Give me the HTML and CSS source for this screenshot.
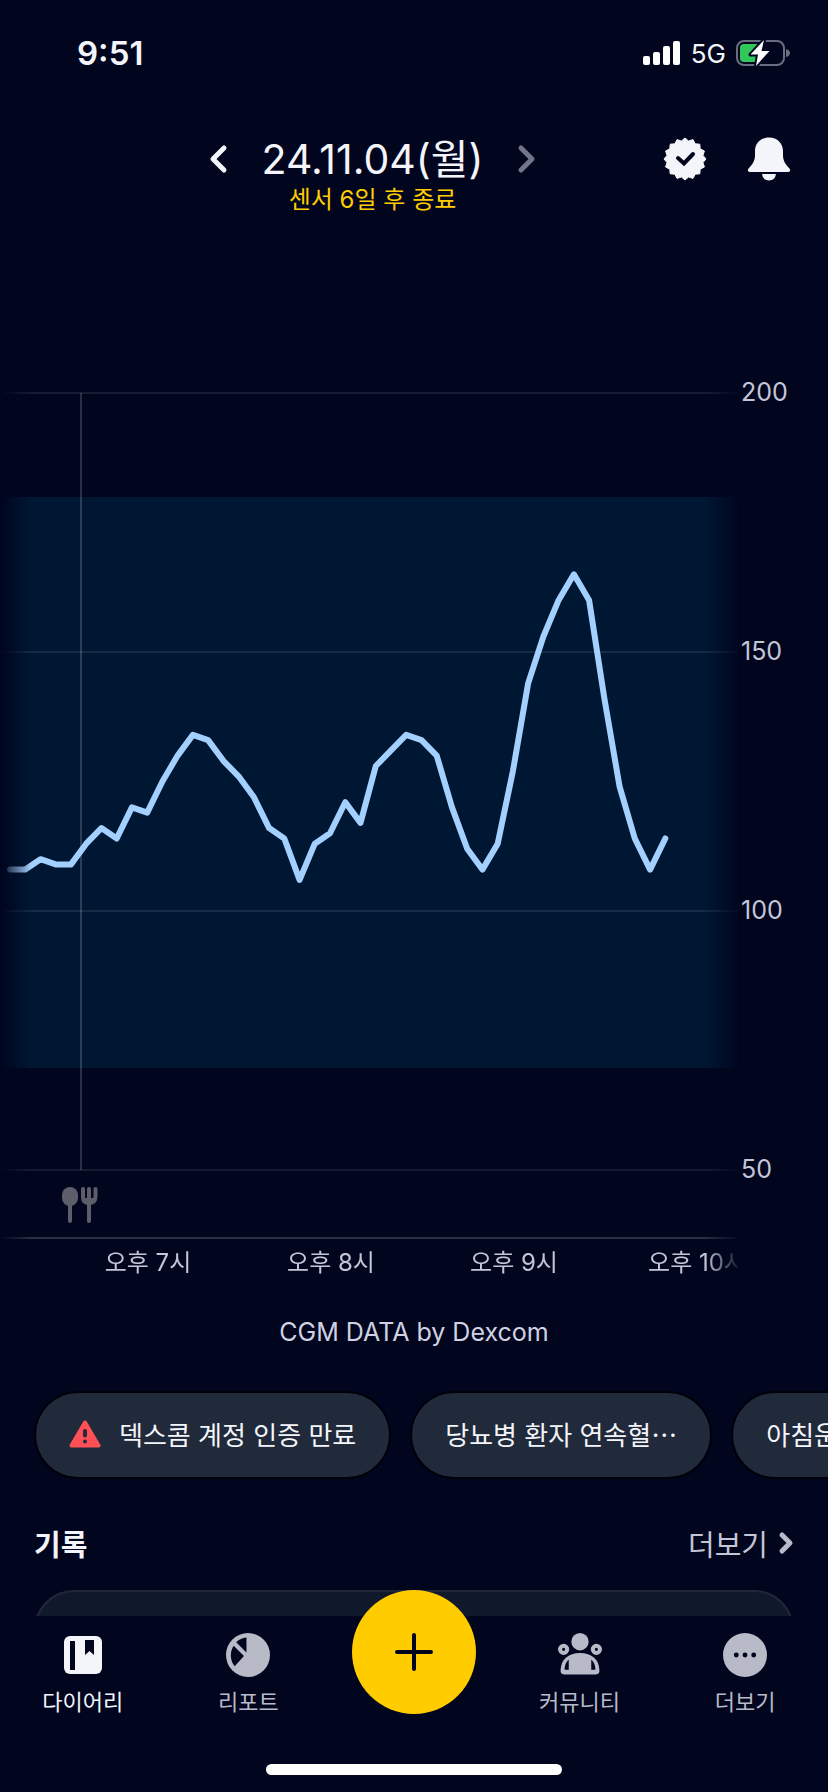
FILE: index.html
```
<!DOCTYPE html>
<html lang="ko">
<head>
  <meta charset="UTF-8">
  <meta name="viewport" content="width=device-width, initial-scale=1">
  <title>다이어리</title>
  <link rel="stylesheet" href="styles.css">
</head>
<body>
  <div class="app">
    <main class="content">
      <div class="status-bar">
        <span class="time">9:51</span>
        <div class="status-icons">
          <svg width="38" height="26" viewBox="0 0 38 26" fill="#fff">
            <rect x="0" y="16" width="7" height="9" rx="2"/>
            <rect x="10" y="12" width="7" height="13" rx="2"/>
            <rect x="20" y="6" width="7" height="19" rx="2"/>
            <rect x="30" y="1" width="7" height="24" rx="2"/>
          </svg>
          <span class="network">5G</span>
          <svg width="54" height="28" viewBox="0 0 54 28">
            <rect x="1" y="2" width="47" height="24" rx="7" fill="none" stroke="#6b6d80" stroke-width="2"/>
            <path d="M50 10q4 1 4 4t-4 4z" fill="#6b6d80"/>
            <path d="M8 5H25V23H8Q4 23 4 19V9Q4 5 8 5z" fill="#30c85a"/>
            <path d="M28 1L14.500 15.500H22L20 27L33.500 12H25.500z" fill="#fff" stroke="#01051e" stroke-width="4" stroke-linejoin="round" paint-order="stroke"/>
          </svg>
        </div>
      </div>

      <header class="header">
        <div class="date-picker">
          <div class="date-row">
            <button type="button" class="icon-button" aria-label="이전 날짜">
              <svg width="24" height="32" viewBox="0 0 24 32" fill="none" stroke="#f4f5fa" stroke-width="5" stroke-linecap="round" stroke-linejoin="round"><path d="M18 5L7 16L18 27"/></svg>
            </button>
            <h1 class="date">24.11.04(월)</h1>
            <button type="button" class="icon-button" aria-label="다음 날짜">
              <svg width="24" height="32" viewBox="0 0 24 32" fill="none" stroke="#72748a" stroke-width="5" stroke-linecap="round" stroke-linejoin="round"><path d="M6 5L17 16L6 27"/></svg>
            </button>
          </div>
          <p class="sensor">센서 6일 후 종료</p>
        </div>
        <div class="header-actions">
          <button type="button" class="icon-button" aria-label="인증">
            <svg width="44" height="44" viewBox="0 0 44 44">
              <polygon fill="#f4f5fa" stroke="#f4f5fa" stroke-linejoin="round" points="22,1 25.600,4 30,2.600 32.200,6.800 36.800,7.200 37.200,11.800 41.400,14 40,18.400 43,22 40,25.600 41.400,30 37.200,32.200 36.800,36.800 32.200,37.200 30,41.400 25.600,40 22,43 18.400,40 14,41.400 11.800,37.200 7.200,36.800 6.800,32.200 2.600,30 4,25.600 1,22 4,18.400 2.600,14 6.800,11.800 7.200,7.200 11.800,6.800 14,2.600 18.400,4"/>
              <path d="M15 21L21 26.500L30 17" fill="none" stroke="#01051e" stroke-width="4" stroke-linecap="round"/>
            </svg>
          </button>
          <button type="button" class="icon-button" aria-label="알림">
            <svg width="44" height="44" viewBox="0 0 44 44" fill="#f4f5fa">
              <path d="M22 0.500C13.500 0.500 8 6.500 8 14V18C8 24 5.500 27.500 1.500 31.500Q-0.500 35 3 35H41Q44.500 35 42.500 31.500C38.500 27.500 36 24 36 18V14C36 6.500 30.500 0.500 22 0.500z"/>
              <path d="M15 37H29Q28 43.500 22 43.500T15 37z"/>
            </svg>
          </button>
        </div>
      </header>

      <svg class="chart" viewBox="0 0 828 930" role="img" aria-label="혈당 그래프">
        <defs>
          <linearGradient id="fade" gradientUnits="userSpaceOnUse" x1="0" y1="0" x2="742" y2="0">
            <stop offset="0" stop-color="#fff" stop-opacity="0"/>
            <stop offset="0.042" stop-color="#fff"/>
            <stop offset="0.95" stop-color="#fff"/>
            <stop offset="1" stop-color="#fff" stop-opacity="0"/>
          </linearGradient>
          <mask id="fadeMask" maskUnits="userSpaceOnUse" x="0" y="0" width="742" height="930">
            <rect width="742" height="930" fill="url(#fade)"/>
          </mask>
        </defs>
        <g mask="url(#fadeMask)">
          <rect class="range" x="0" y="136" width="742" height="571"/>
          <path class="grid" d="M0 32H742M0 291H742M0 550H742M0 809H742"/>
          <path class="marker" d="M81 32V809"/>
          <path class="axis" d="M0 877H742"/>
          <polyline class="glucose" id="glucose"/>
          <g class="hours">
            <text x="148" y="910">오후 7시</text>
            <text x="331" y="910">오후 8시</text>
            <text x="514" y="910">오후 9시</text>
            <text x="697" y="910">오후 10시</text>
          </g>
        </g>
        <!-- meal -->
        <g fill="#5d5e69">
          <rect x="62" y="826" width="16" height="19" rx="8"/>
          <rect x="68" y="842" width="4" height="20" rx="2"/>
          <path d="M83 828V836Q83 842 89 842T95.500 836V828M89 828V860" fill="none" stroke="#5d5e69" stroke-width="4" stroke-linecap="round"/>
          <path d="M83 837H95L92 843H86z"/>
        </g>
        <g class="levels">
          <text x="741" y="40">200</text>
          <text x="741" y="299">150</text>
          <text x="741" y="558">100</text>
          <text x="741" y="817">50</text>
        </g>
      </svg>
      <p class="source">CGM DATA by Dexcom</p>

      <div class="chips">
        <button type="button" class="chip">
          <svg width="32" height="28" viewBox="0 0 32 28">
            <path d="M16 2.500L29.500 25.500H2.500z" fill="#ff5058" stroke="#ff5058" stroke-width="4" stroke-linejoin="round"/>
            <path d="M16 11V15.500M16 21.500V21.600" stroke="#202a3a" stroke-width="4" stroke-linecap="round"/>
          </svg>
          덱스콤 계정 인증 만료
        </button>
        <button type="button" class="chip">당뇨병 환자 연속혈⋯</button>
        <button type="button" class="chip">아침운동 기록</button>
      </div>

      <section class="records">
        <div class="records-head">
          <h2>기록</h2>
          <a href="#" class="more">더보기
            <svg width="16" height="24" viewBox="0 0 16 24" fill="none" stroke="#b8bac8" stroke-width="5" stroke-linecap="round" stroke-linejoin="round"><path d="M4 4L12 12L4 20"/></svg>
          </a>
        </div>
        <div class="record-card"></div>
      </section>
    </main>

    <nav class="tab-bar">
      <div class="tabs">
        <a href="#" class="tab active">
          <svg width="44" height="44" viewBox="0 0 44 44">
            <rect x="3" y="3" width="38" height="38" rx="6" fill="currentColor"/>
            <path d="M9 8h5v29h-5zM24 7h9v15l-4.500-4l-4.500 4z" fill="#01051e"/>
          </svg>
          다이어리
        </a>
        <a href="#" class="tab">
          <svg width="44" height="44" viewBox="0 0 43 43">
            <circle cx="21.500" cy="21.500" r="21.500" fill="currentColor"/>
            <path d="M20 4.500A17 17 0 0 0 10 9L20 19zM7.500 12.500L17.500 22.500L8.500 32.500A17 17 0 0 1 7.500 12.500z" fill="#01051e"/>
          </svg>
          리포트
        </a>
        <button type="button" class="add" aria-label="추가">
          <svg width="40" height="40" viewBox="0 0 40 40" stroke="#01051e" stroke-width="4" stroke-linecap="round"><path d="M3 20H37M20 3V37"/></svg>
        </button>
        <a href="#" class="tab">
          <svg width="44" height="44" viewBox="0 0 43 43">
            <circle cx="21.500" cy="8.500" r="8.500" fill="currentColor"/>
            <circle cx="5.500" cy="16" r="3.500" fill="none" stroke="currentColor" stroke-width="4"/>
            <circle cx="37.500" cy="16" r="3.500" fill="none" stroke="currentColor" stroke-width="4"/>
            <path d="M2.500 37C2.500 26 10 19.500 21.500 19.500S40.500 26 40.500 37Q40.500 40.500 37 40.500H6Q2.500 40.500 2.500 37z" fill="currentColor"/>
            <path d="M10.500 26V36H6.500Q6.500 29.500 10.500 26zM32.500 26V36H36.500Q36.500 29.500 32.500 26z" fill="#01051e"/>
          </svg>
          커뮤니티
        </a>
        <a href="#" class="tab">
          <svg width="44" height="44" viewBox="0 0 43 43">
            <circle cx="21.500" cy="21.500" r="21.500" fill="currentColor"/>
            <g fill="#01051e"><circle cx="13" cy="21.500" r="2.400"/><circle cx="21.500" cy="21.500" r="2.400"/><circle cx="30" cy="21.500" r="2.400"/></g>
          </svg>
          더보기
        </a>
      </div>
      <div class="home-bar"></div>
    </nav>
  </div>

  <script>
    // one reading every 5 minutes, mg/dL
    const readings = [
      108, 108, 110, 109, 109, 113, 116, 114, 120, 119, 125, 130, 134, 133, 129,
      126, 122, 116, 114, 106, 113, 115, 121, 117, 128, 131, 134, 133, 130, 120,
      112, 108, 113, 127, 144, 153, 160, 165, 160, 141, 124, 114, 108, 114
    ];

    const points = readings.map(function(value, i) {
      const x = 10 + i * 15.24;
      const y = 32 + (200 - value) * 5.18;
      return x.toFixed(1) + ',' + y.toFixed(1);
    });

    document.getElementById('glucose').setAttribute('points', points.join(' '));
  </script>
</body>
</html>
```
FILE: styles.css
```
* {
  box-sizing: border-box;
}

body {
  margin: 0;
  background-color: #01051e;
  color: #f4f5fa;
  font-family: Inter, "Noto Sans CJK KR", sans-serif;
}

h1,
h2,
p {
  margin: 0;
}

a {
  color: inherit;
  text-decoration: none;
}

button {
  border: none;
  font: inherit;
  color: inherit;
  cursor: pointer;
}

svg {
  display: block;
  flex-shrink: 0;
}

.app {
  display: flex;
  flex-direction: column;
  height: 100vh;
}

.content {
  flex: 1;
  min-height: 0;
  overflow-x: hidden;
  overflow-y: auto;
  scrollbar-width: none;
}

/* status bar */

.status-bar {
  display: flex;
  align-items: center;
  justify-content: space-between;
  height: 106px;
  padding: 0 38px 0 77px;
}

.time {
  font-size: 33px;
  font-weight: 600;
}

.status-icons {
  display: flex;
  align-items: center;
  gap: 10px;
}

.network {
  font-size: 26px;
  font-weight: 400;
}

/* header */

.header {
  display: flex;
  padding: 29px 37px 0 82px;
}

.date-picker {
  flex: 1;
}

.date-row {
  display: flex;
  align-items: center;
  justify-content: center;
  gap: 32px;
  height: 48px;
}

.date {
  font-size: 41px;
  font-weight: 400;
  line-height: 48px;
}

.sensor {
  margin-top: 3px;
  color: #ffcc00;
  font-size: 24px;
  line-height: 28px;
  text-align: center;
}

.header-actions {
  display: flex;
  align-items: center;
  gap: 40px;
  height: 48px;
}

.icon-button {
  padding: 0;
  background: none;
}

/* chart */

.chart {
  width: 100%;
  height: auto;
  margin-top: 147px;
}

.range {
  fill: #001733;
}

.grid {
  stroke: rgba(255, 255, 255, 0.09);
  stroke-width: 2;
}

.marker,
.axis {
  stroke: rgba(255, 255, 255, 0.17);
  stroke-width: 2;
}

.glucose {
  fill: none;
  stroke: #a4d0ff;
  stroke-width: 6;
  stroke-linecap: round;
  stroke-linejoin: round;
}

.hours text,
.levels text {
  fill: #c4c6d6;
  font-size: 24px;
}

.levels text {
  font-size: 25px;
}

.hours text {
  text-anchor: middle;
}

.source {
  margin-top: 25px;
  color: #d0d2e2;
  font-size: 25px;
  line-height: 32px;
  text-align: center;
}

/* chips */

.chips {
  display: flex;
  gap: 19px;
  margin-top: 43px;
  padding-left: 34px;
  overflow: hidden;
}

.chip {
  display: flex;
  flex-shrink: 0;
  align-items: center;
  gap: 18px;
  height: 88px;
  padding: 0 33px 3px;
  border: 2px solid #000008;
  border-radius: 44px;
  background-color: #202a3a;
  font-size: 26px;
  white-space: nowrap;
}

/* records */

.records {
  padding: 44px 34px 0;
}

.records-head {
  display: flex;
  align-items: center;
  justify-content: space-between;
  height: 40px;
}

.records-head h2 {
  font-size: 29px;
  font-weight: 700;
}

.more {
  display: flex;
  align-items: center;
  gap: 10px;
  color: #c4c6d6;
  font-size: 29px;
}

.record-card {
  height: 240px;
  margin-top: 27px;
  border: 2px solid #202738;
  border-radius: 40px;
  background-color: #10182b;
}

/* tab bar */

.tab-bar {
  background-color: #01051e;
}

.tabs {
  display: grid;
  grid-template-columns: repeat(5, 1fr);
  height: 148px;
}

.tab {
  display: flex;
  flex-direction: column;
  align-items: center;
  gap: 11px;
  padding-top: 17px;
  color: #b8bac8;
  font-size: 22px;
  line-height: 28px;
}

.tab.active {
  color: #f4f5fa;
}

.add {
  display: flex;
  align-items: center;
  justify-content: center;
  justify-self: center;
  position: relative;
  width: 124px;
  height: 124px;
  margin-top: -26px;
  padding: 0;
  border-radius: 50%;
  background-color: #ffcc00;
}

.home-bar {
  width: 296px;
  height: 11px;
  margin: 0 auto 17px;
  border-radius: 6px;
  background-color: #fff;
}
```
